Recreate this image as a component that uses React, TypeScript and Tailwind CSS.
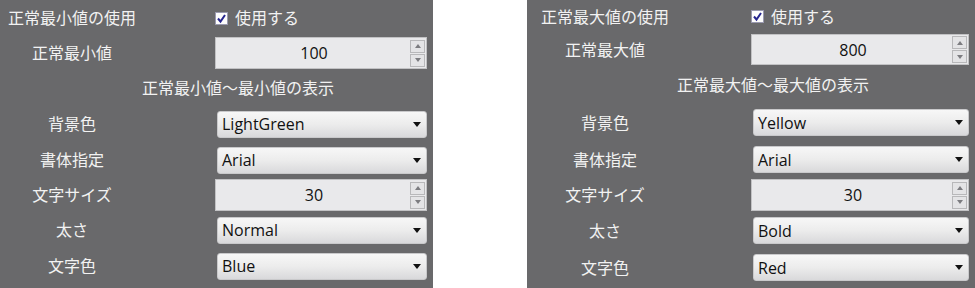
import React from "react";

type Row =
  | { kind: "select"; label: string; value: string }
  | { kind: "number"; label: string; value: string };

type PanelProps = {
  width: string;
  labelCol: string;
  gap: string;
  headingPad: string;
  heading: string;
  useLabel: string;
  valueLabel: string;
  value: string;
  topRow: string;
  numRow: string;
  headRow: string;
  selRow: string;
  numBox: string;
  rows: Row[];
};

const jp = { fontFamily: '"Noto Sans CJK JP", "Noto Sans", sans-serif' };
const latin = { fontFamily: '"Open Sans", "Liberation Sans", sans-serif' };

const Arrow = () => (
  <svg width="8" height="5" viewBox="0 0 8 5" className="shrink-0">
    <path d="M0 0H8L4 5Z" fill="#111" />
  </svg>
);

const Spinner = () => (
  <div className="flex flex-col gap-[1px] mr-[1px]">
    {[0, 1].map((i) => (
      <div
        key={i}
        className="w-[15px] h-[13px] border border-[#b8b8ba] bg-[#e4e4e6] flex items-center justify-center"
      >
        <svg width="6" height="4" viewBox="0 0 6 4">
          <path d={i === 0 ? "M0 4H6L3 0Z" : "M0 0H6L3 4Z"} fill="#7c7c80" />
        </svg>
      </div>
    ))}
  </div>
);

const NumberBox = ({ value, cls }: { value: string; cls: string }) => (
  <div className={`${cls} w-full border border-[#c2c2c4] bg-[#e9e9eb] flex items-center`}>
    <span className="flex-1 text-center text-[16px] text-[#111] pl-[2px]" style={latin}>
      {value}
    </span>
    <Spinner />
  </div>
);

const Select = ({ value }: { value: string }) => (
  <div className="ml-[2px] h-[27px] rounded-[3px] border border-[#c9c9cb] bg-gradient-to-b from-[#f7f7f7] via-[#ececec] to-[#d9d9db] flex items-center justify-between pl-[4px] pr-[5px]">
    <span className="text-[16px] text-[#111] leading-none" style={latin}>
      {value}
    </span>
    <Arrow />
  </div>
);

const Check = () => (
  <svg width="13" height="13" viewBox="0 0 13 13" className="shrink-0">
    <rect x="0.5" y="0.5" width="12" height="12" fill="#fdfdfd" stroke="#9a9ab0" />
    <path d="M3 6.5L5.5 9.5L10 3" fill="none" stroke="#25258f" strokeWidth="2" />
  </svg>
);

const Panel = (p: PanelProps) => {
  const label = (text: string) => (
    <div
      className={`${p.labelCol} text-center text-[16px] leading-none text-[#f2f2f2] whitespace-nowrap -mt-[2px]`}
      style={jp}
    >
      {text}
    </div>
  );

  return (
    <div className={`${p.width} h-[288px] bg-[#69696b] flex flex-col`}>
      <div className={`${p.topRow} flex items-center`}>
        {label(p.useLabel)}
        <div className={`${p.gap} flex items-center gap-[7px]`}>
          <Check />
          <span className="text-[16px] leading-none text-[#f2f2f2] -mt-[2px]" style={jp}>
            使用する
          </span>
        </div>
      </div>
      <div className={`${p.numRow} flex items-center`}>
        {label(p.valueLabel)}
        <div className={`${p.gap} flex-1 pr-[6px]`}>
          <NumberBox value={p.value} cls={p.numBox} />
        </div>
      </div>
      <div className={`${p.headRow} flex items-center ${p.headingPad}`}>
        <span className="text-[16px] leading-none text-[#f2f2f2] -mt-[2px]" style={jp}>
          {p.heading}
        </span>
      </div>
      {p.rows.map((r) => (
        <div key={r.label} className={`${r.kind === "number" ? "h-[34px]" : p.selRow} flex items-center`}>
          {label(r.label)}
          <div className={`${p.gap} flex-1 pr-[6px]`}>
            {r.kind === "number" ? <NumberBox value={r.value} cls="h-[32px]" /> : <Select value={r.value} />}
          </div>
        </div>
      ))}
    </div>
  );
};

export default function App() {
  return (
    <div className="w-[975px] h-[288px] bg-white flex justify-between overflow-hidden">
      <Panel
        width="w-[433px]"
        labelCol="w-[144px]"
        gap="ml-[71px]"
        headingPad="pl-[142px]"
        heading="正常最小値〜最小値の表示"
        useLabel="正常最小値の使用"
        valueLabel="正常最小値"
        value="100"
        topRow="h-[36px]"
        numRow="h-[34px]"
        headRow="h-[36px]"
        selRow="h-[36px]"
        numBox="h-[32px]"
        rows={[
          { kind: "select", label: "背景色", value: "LightGreen" },
          { kind: "select", label: "書体指定", value: "Arial" },
          { kind: "number", label: "文字サイズ", value: "30" },
          { kind: "select", label: "太さ", value: "Normal" },
          { kind: "select", label: "文字色", value: "Blue" },
        ]}
      />
      <Panel
        width="w-[448px]"
        labelCol="w-[156px]"
        gap="ml-[68px]"
        headingPad="pl-[150px]"
        heading="正常最大値〜最大値の表示"
        useLabel="正常最大値の使用"
        valueLabel="正常最大値"
        value="800"
        topRow="h-[33px]"
        numRow="h-[33px]"
        headRow="h-[38px]"
        selRow="h-[37px]"
        numBox="h-[31px]"
        rows={[
          { kind: "select", label: "背景色", value: "Yellow" },
          { kind: "select", label: "書体指定", value: "Arial" },
          { kind: "number", label: "文字サイズ", value: "30" },
          { kind: "select", label: "太さ", value: "Bold" },
          { kind: "select", label: "文字色", value: "Red" },
        ]}
      />
    </div>
  );
}
